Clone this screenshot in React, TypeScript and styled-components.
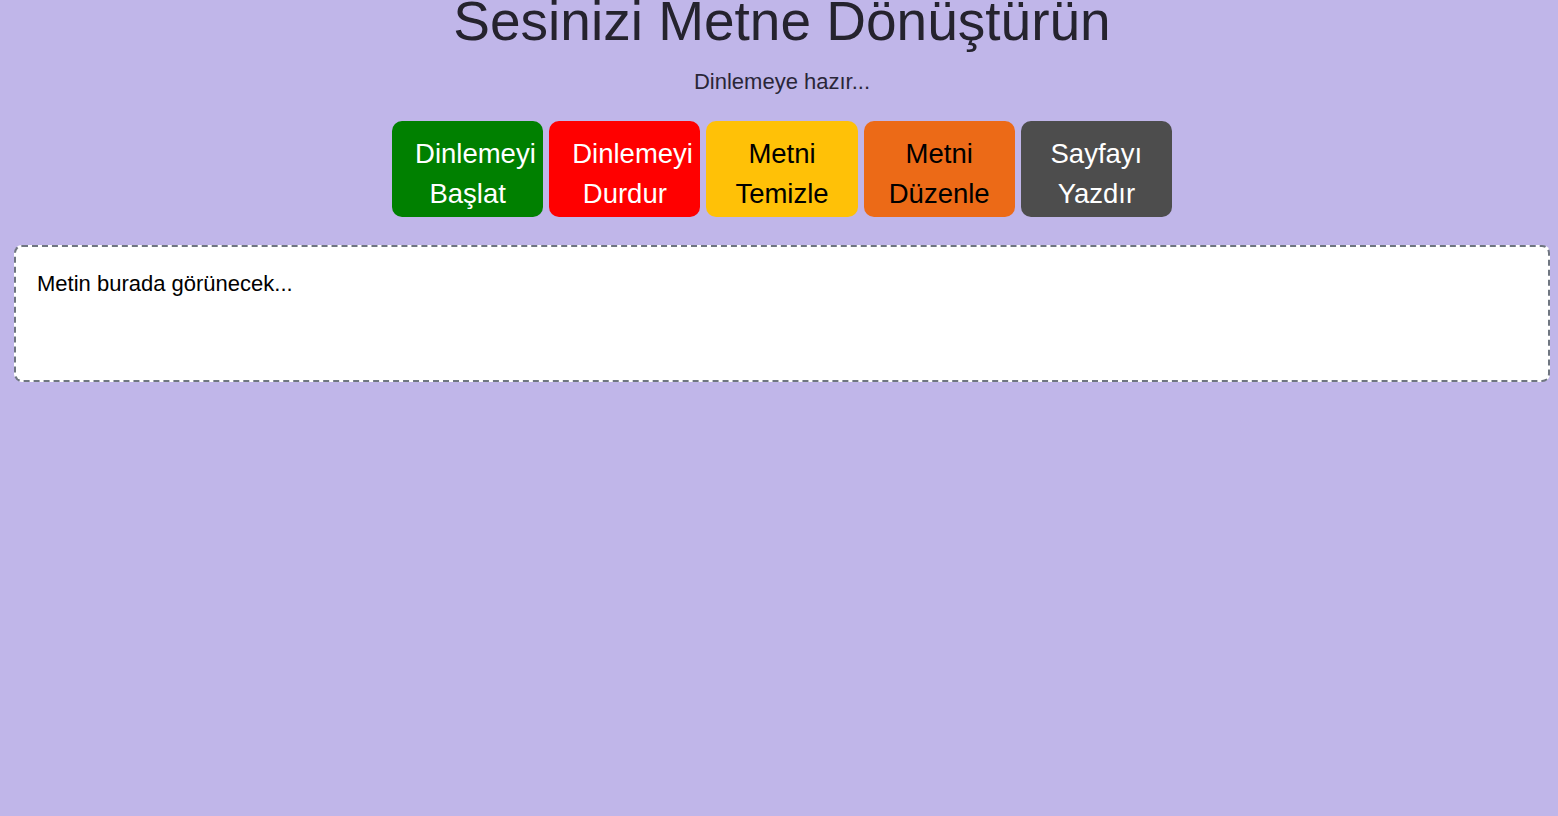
import React, { useState } from 'react';
import styled, { createGlobalStyle } from 'styled-components';

const GlobalStyle = createGlobalStyle`
  html, body {
    margin: 0;
    padding: 0;
    background-color: #c0b6e9;
    font-family: "Liberation Sans", Arial, sans-serif;
  }
`;

const Container = styled.main`
  box-sizing: border-box;
  min-height: 816px;
  padding: 0 8px 0 14px;
  text-align: center;
  overflow: hidden;
`;

const Title = styled.h1`
  margin: -10px 0 0;
  font-size: 55px;
  font-weight: 400;
  line-height: 62px;
  color: #25232e;
`;

const Status = styled.p`
  margin: 17px 0 0;
  font-size: 22px;
  line-height: 25px;
  color: #2a2638;
`;

const ButtonRow = styled.div`
  display: flex;
  justify-content: center;
  gap: 6px;
  margin-top: 27px;
`;

const ActionButton = styled.button<{ $bg: string; $fg: string }>`
  box-sizing: border-box;
  width: 151.2px;
  height: 96px;
  padding: 13px 23px 3px;
  border: none;
  border-radius: 10px;
  background-color: ${(p) => p.$bg};
  color: ${(p) => p.$fg};
  font-family: "Liberation Sans", Arial, sans-serif;
  font-size: 27.5px;
  line-height: 40px;
  text-align: center;
  cursor: pointer;
`;

const Output = styled.div`
  box-sizing: border-box;
  width: 100%;
  min-height: 137px;
  margin-top: 28px;
  padding: 22px 21px;
  border: 2px dashed #6f7680;
  border-radius: 8px;
  background: #ffffff;
  text-align: left;
  font-size: 22px;
  line-height: 30px;
  color: #000000;
`;

const buttons = [
  { label: 'Dinlemeyi Başlat', bg: '#008000', fg: '#ffffff' },
  { label: 'Dinlemeyi Durdur', bg: '#ff0000', fg: '#ffffff' },
  { label: 'Metni Temizle', bg: '#ffc107', fg: '#000000' },
  { label: 'Metni Düzenle', bg: '#ec6a17', fg: '#000000' },
  { label: 'Sayfayı Yazdır', bg: '#4d4d4d', fg: '#ffffff' },
];

const App = () => {
  const [text] = useState('Metin burada görünecek...');

  return (
    <>
      <GlobalStyle />
      <Container>
        <Title>Sesinizi Metne Dönüştürün</Title>
        <Status>Dinlemeye hazır...</Status>
        <ButtonRow>
          {buttons.map((b) => (
            <ActionButton key={b.label} $bg={b.bg} $fg={b.fg}>
              {b.label}
            </ActionButton>
          ))}
        </ButtonRow>
        <Output>{text}</Output>
      </Container>
    </>
  );
};

export default App;
